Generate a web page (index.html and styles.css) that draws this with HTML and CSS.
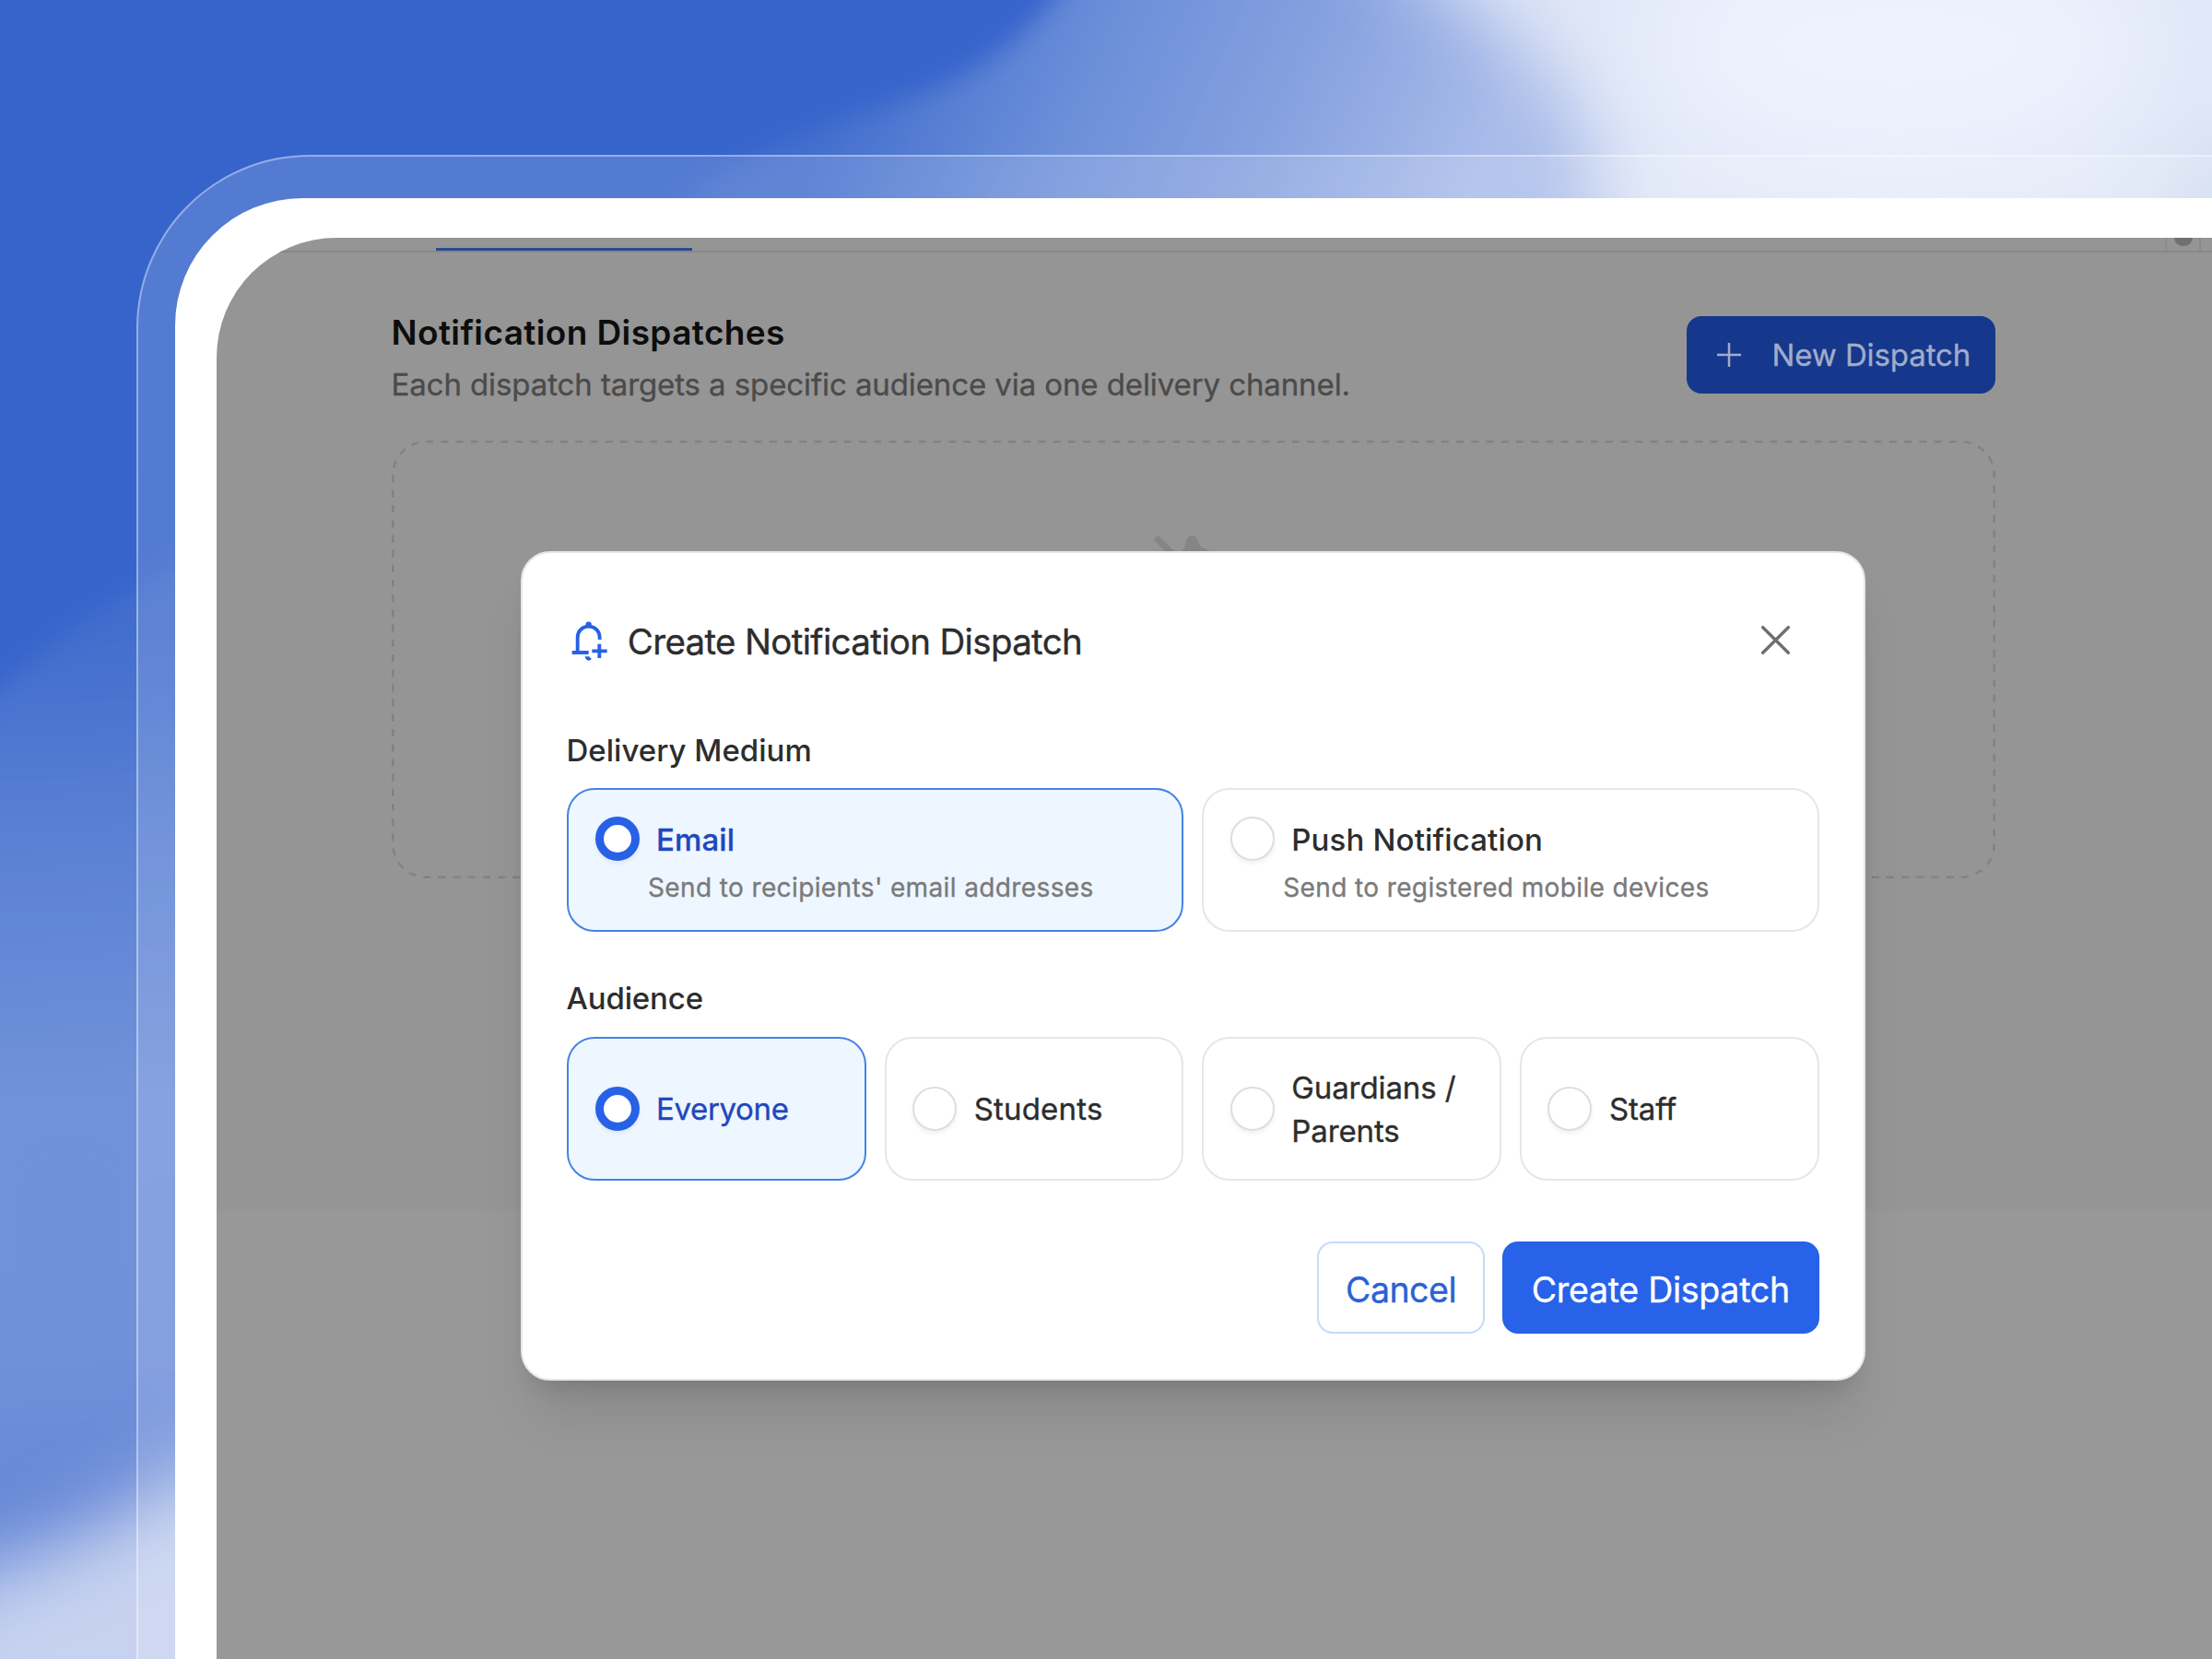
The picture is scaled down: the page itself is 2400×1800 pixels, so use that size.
FILE: index.html
```
<!DOCTYPE html>
<html lang="en">
<head>
<meta charset="utf-8">
<title>Notification Dispatches</title>
<link rel="stylesheet" href="styles.css">
</head>
<body>
<svg class="backdrop" viewBox="0 0 2400 1800" aria-hidden="true">
  <defs>
    <linearGradient id="wash" gradientUnits="userSpaceOnUse" x1="940" y1="60" x2="1540" y2="330">
      <stop offset="0" stop-color="#4570ce"/>
      <stop offset=".35" stop-color="#6c8fd9"/>
      <stop offset=".65" stop-color="#84a0df"/>
      <stop offset="1" stop-color="#a9bbe9"/>
    </linearGradient>
    <linearGradient id="side" gradientUnits="userSpaceOnUse" x1="0" y1="700" x2="60" y2="1800">
      <stop offset="0" stop-color="#436ecd"/>
      <stop offset=".2" stop-color="#5b81d4"/>
      <stop offset=".45" stop-color="#7192da"/>
      <stop offset=".7" stop-color="#7090da"/>
      <stop offset=".85" stop-color="#6788d7"/>
      <stop offset="1" stop-color="#7a97dd"/>
    </linearGradient>
    <filter id="b12" x="-20%" y="-20%" width="140%" height="140%"><feGaussianBlur stdDeviation="14"/></filter>
    <filter id="b35" x="-40%" y="-40%" width="180%" height="180%"><feGaussianBlur stdDeviation="42"/></filter>
    <filter id="b60" x="-60%" y="-60%" width="220%" height="220%"><feGaussianBlur stdDeviation="60"/></filter>
  </defs>
  <rect width="2400" height="1800" fill="#3764cb"/>
  <path d="M1185 -60C1120 40 1070 80 960 115C850 150 780 180 700 260H2500V-60Z" fill="url(#wash)" filter="url(#b12)"/>
  <path d="M1440 -110C1590 0 1695 60 1722 150C1732 200 1740 260 1740 360H2600V-110Z" fill="#dfe6f6" filter="url(#b35)"/>
  <ellipse cx="2060" cy="50" rx="280" ry="150" fill="#edf2fe" filter="url(#b60)"/>
  <ellipse cx="2450" cy="240" rx="100" ry="70" fill="#cbd9f1" filter="url(#b35)"/>
  <path d="M-60 805C10 735 70 670 240 595V1900H-60Z" fill="url(#side)" filter="url(#b12)"/>
  <ellipse cx="75" cy="1330" rx="30" ry="60" fill="#668ad6" opacity=".3" filter="url(#b35)"/>
  <path d="M-80 1725C60 1700 120 1640 320 1540V1960H-80Z" fill="#c6d2ef" filter="url(#b35)"/>
</svg>

<div class="frame">
  <div class="bezel">
    <main class="screen">
      <div class="tabbar">
        <span class="tab-active"></span>
        <span class="tab-handle"><i></i></span>
      </div>
      <section class="page">
        <header class="page-head">
          <div>
            <h1>Notification Dispatches</h1>
            <p>Each dispatch targets a specific audience via one delivery channel.</p>
          </div>
          <button class="btn-new">
            <svg width="26" height="26" viewBox="0 0 26 26"><path d="M13 0V26M0 13H26"/></svg>
            <span>New Dispatch</span>
          </button>
        </header>
        <div class="empty">
          <svg width="1740" height="475" viewBox="0 0 1740 475">
            <rect x="1.25" y="1.25" width="1737.5" height="472.5" rx="36" fill="none" stroke="#828282" stroke-width="2.5" stroke-dasharray="8 8.2"/>
            <path d="M829 105L856 132" stroke="#858585" stroke-width="7"/>
            <path d="M855 121C861 117 861 113 862 109C864 101 873 101 875 109C876 113 878 116 882 117L890 121V130H855Z" fill="#858585"/>
          </svg>
        </div>
      </section>

      <div class="overlay">
        <section class="dialog" role="dialog">
          <header class="dialog-head">
            <svg class="bell" width="39.3" height="43.3" viewBox="60 45 118 130">
              <path d="M62 147H116M80 147V98C80 77 95 62 116 62S152 77 152 98V105M151 119V165M127 142H176" fill="none" stroke="#2761e6" stroke-width="11.5"/>
              <circle cx="116" cy="56" r="9.5" fill="#2761e6"/>
              <path d="M104 160H118Q120 165 126 167Q122 173 116 173Q106 172 104 160Z" fill="#2761e6"/>
            </svg>
            <h2>Create Notification Dispatch</h2>
            <svg class="close" width="31" height="31" viewBox="0 0 31 31"><path d="M1.7 1.7L29.3 29.3M29.3 1.7L1.7 29.3"/></svg>
          </header>

          <h3 class="label-medium">Delivery Medium</h3>
          <div class="cards cards-2">
            <div class="card on">
              <div class="pick"><i class="radio"></i><b class="email">Email</b></div>
              <p>Send to recipients' email addresses</p>
            </div>
            <div class="card">
              <div class="pick"><i class="radio"></i><b>Push Notification</b></div>
              <p>Send to registered mobile devices</p>
            </div>
          </div>

          <h3 class="label-audience">Audience</h3>
          <div class="cards cards-4">
            <div class="card on"><i class="radio"></i><span class="everyone">Everyone</span></div>
            <div class="card"><i class="radio"></i><span class="students">Students</span></div>
            <div class="card"><i class="radio"></i><span>Guardians /<br>Parents</span></div>
            <div class="card"><i class="radio"></i><span>Staff</span></div>
          </div>

          <footer class="actions">
            <button class="btn-cancel">Cancel</button>
            <button class="btn-create">Create Dispatch</button>
          </footer>
        </section>
      </div>
    </main>
  </div>
</div>
</body>
</html>
```
FILE: styles.css
```
* { box-sizing: border-box; margin: 0; padding: 0; }

body {
  width: 2400px;
  height: 1800px;
  overflow: hidden;
  position: relative;
  padding: 168px 0 0 148px;
  background: #3764cb;
  font-family: Inter, "Liberation Sans", sans-serif;
  -webkit-text-stroke: .35px currentColor;
}

button { font-family: inherit; border: 0; }

.backdrop { position: absolute; inset: 0; width: 2400px; height: 1800px; }

/* device frame running off the right and bottom edges */
.frame {
  position: relative;
  width: 2252px;
  height: 1632px;
  padding: 45px 0 0 40px;
  border: solid rgba(255, 255, 255, .38);
  border-width: 2px 0 0 2px;
  border-top-left-radius: 188px;
  background: rgba(255, 255, 255, .15);
}
.bezel {
  height: 100%;
  padding: 43px 0 0 45px;
  border-top-left-radius: 138px;
  background: #fff;
}
.screen {
  position: relative;
  height: 100%;
  overflow: hidden;
  border-top-left-radius: 130px;
  background: linear-gradient(#959595 1054px, #989898 1054px);
}

.tabbar {
  display: flex;
  justify-content: space-between;
  align-items: flex-end;
  height: 16px;
  padding: 0 12px 0 238px;
  border-bottom: 2px solid #888;
}
.tab-active { width: 278px; height: 3px; background: #2a4a8c; }
.tab-handle {
  display: flex;
  justify-content: center;
  align-items: flex-start;
  width: 39px;
  height: 14px;
  border: solid #8b8b8b;
  border-width: 0 2px;
}
.tab-handle i { width: 20px; height: 9px; border-radius: 0 0 10px 10px; background: #707070; }

.page { width: 1740px; margin-left: 190px; }
.page-head {
  display: flex;
  justify-content: space-between;
  padding-top: 62px;
}
.page-head h1 {
  margin-left: -.5px;
  font-size: 37px;
  font-weight: 600;
  line-height: 50px;
  letter-spacing: .38px;
  color: #0d0d0d;
  -webkit-text-stroke: 0;
}
.page-head p {
  margin: 6px 0 0 -.5px;
  font-size: 33px;
  line-height: 50px;
  letter-spacing: -.1px;
  color: #4b4b4b;
}
.btn-new {
  display: flex;
  align-items: center;
  gap: 33.5px;
  width: 335px;
  height: 84px;
  margin-top: 7px;
  padding: 0 0 0 33px;
  border-radius: 16px;
  background: #15388c;
  color: #a1acc8;
  font-size: 33px;
  letter-spacing: -.1px;
  white-space: nowrap;
}
.btn-new path { stroke: #a1acc8; stroke-width: 2.5; }
.empty { height: 475px; margin-top: 36px; }
.empty svg { display: block; }

.overlay { position: absolute; inset: 0; padding: 339.5px 0 0 330px; }
.dialog {
  width: 1458.5px;
  height: 900px;
  padding: 66px 48px 0 48px;
  border: 2px solid #e6e6e6;
  border-radius: 32px;
  background: #fff;
  box-shadow: 0 47px 58px -12px rgba(0, 0, 0, .1), 0 19px 23px -14px rgba(0, 0, 0, .13);
  color: #2d2d2d;
}
.dialog-head {
  display: flex;
  align-items: center;
  height: 60px;
  padding: 0 32px 0 5px;
}
.dialog-head h2 {
  flex: 1;
  margin-left: 21.5px;
  font-size: 38.5px;
  font-weight: 400;
  line-height: 60px;
  letter-spacing: -.67px;
}
.close { margin-top: -2px; }
.close path { stroke: #6f6f6f; stroke-width: 3.4; stroke-linecap: round; }

.dialog h3 {
  margin-left: -.5px;
  font-size: 33px;
  font-weight: 500;
  line-height: 50px;
}
.dialog h3, .pick b { -webkit-text-stroke: 0; }
.label-medium { margin-top: 63.5px; letter-spacing: .02px; }
.label-audience { margin-top: 47px; letter-spacing: -.15px; }

.cards { display: grid; gap: 20px; margin-top: 16px; }
.cards-2 { grid-template-columns: repeat(2, 1fr); }
.cards-4 { grid-template-columns: repeat(4, 1fr); margin-top: 17px; }
.card {
  height: 156px;
  border: 2.5px solid #e6e6e6;
  border-radius: 30px;
  background: #fff;
}
.card.on { border-color: #4583e3; background: #eef6ff; }
.cards-2 .card { padding: 28px 28px 28px 28.5px; }
.cards-4 .card { display: flex; align-items: center; gap: 18.5px; padding-left: 28.5px; }

.radio {
  flex: none;
  width: 48px;
  height: 48px;
  border: 2.5px solid #dedede;
  border-radius: 50%;
  background: #fff;
  box-shadow: 0 3px 5px rgba(0, 0, 0, .06);
}
.on .radio { border: 9.5px solid #2761e6; }

.pick { display: flex; align-items: center; gap: 18.5px; }
.pick b {
  font-size: 33px;
  font-weight: 500;
  line-height: 48px;
  letter-spacing: .15px;
  padding-top: 2px;
  margin-bottom: -1px;
}
.pick b.email { color: #2147bd; letter-spacing: .1px; -webkit-text-stroke: .3px currentColor; }
.card p {
  margin: 9px 0 0 57.5px;
  font-size: 28px;
  line-height: 40px;
  letter-spacing: .38px;
  color: #7a7a7a;
}
.card span { font-size: 33px; line-height: 47px; letter-spacing: -.1px; padding-top: 1px; }
.card span.everyone { color: #2147bd; letter-spacing: -.35px; }
.card span.students { letter-spacing: .2px; }

.actions {
  display: flex;
  justify-content: flex-end;
  gap: 19px;
  margin-top: 66px;
}
.actions button { height: 100px; border-radius: 17px; font-size: 37.5px; padding-top: 4px; }
.btn-cancel {
  width: 182px;
  border: 2.5px solid #c5dbf9 !important;
  background: #fff;
  color: #2a62d6;
  letter-spacing: -.5px;
}
.btn-create { width: 343.5px; background: #2762e8; color: #fff; letter-spacing: -.28px; }
```
